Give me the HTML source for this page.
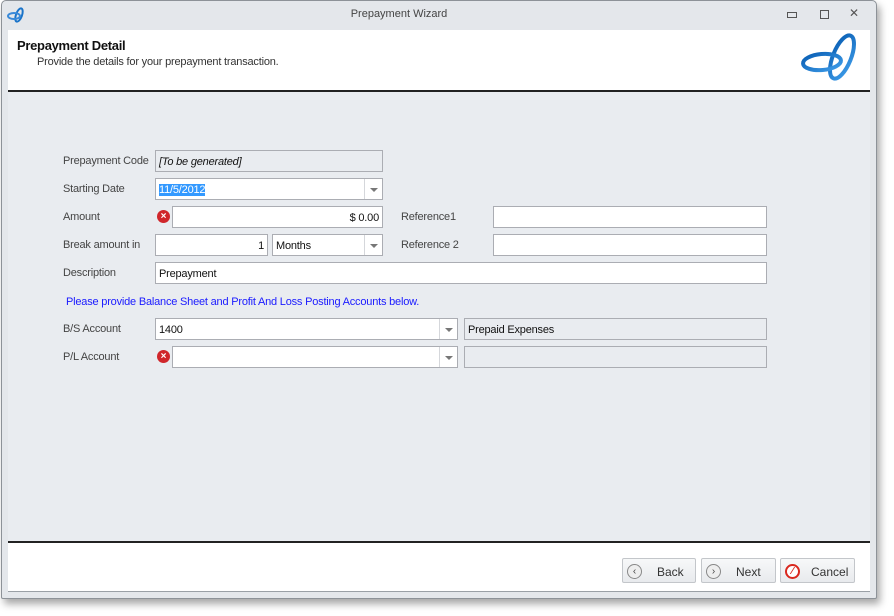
<!DOCTYPE html>
<html><head><style>
*{margin:0;padding:0;box-sizing:border-box}
body{width:894px;height:616px;background:#fff;font-family:"Liberation Sans",sans-serif;font-size:11px;color:#333;position:relative;overflow:hidden}
.a{position:absolute}
.win{left:1px;top:0;width:876px;height:599px;background:#e4e7eb;border:1px solid #8d9298;border-radius:5px 5px 2px 2px;box-shadow:3px 5px 8px rgba(0,0,0,.35)}
.lbl{position:absolute;color:#444;font-size:11px;letter-spacing:-0.2px}
.box{position:absolute;border:1px solid #abadb3;background:#fff;height:22px;font-size:11px;color:#111;padding:5px 3px 0;white-space:nowrap;letter-spacing:-0.2px}
.gray{background:#e9ecf0}
.dd{position:absolute;right:0;top:0;width:18px;height:20px;border-left:1px solid #d5d7db}
.dd:after{content:"";position:absolute;left:5px;top:9px;border-left:4px solid transparent;border-right:4px solid transparent;border-top:4px solid #777}
.err{position:absolute;width:13px;height:13px;border-radius:50%;background:#d0262b;color:#fff;font-size:10px;font-weight:bold;line-height:13px;text-align:center}
.btn{position:absolute;top:558px;height:25px;border:1px solid #c3c6ca;border-radius:2px;background:linear-gradient(#f7f8f9,#e8eaed);font-size:12px;color:#333}
.ci{position:absolute;left:4px;top:5px;width:15px;height:15px;border-radius:50%;border:1px solid #888;background:#eee;font-size:10px;line-height:13px;text-align:center;color:#444}
</style></head><body>
<div class="a win"></div>
<svg class="a" style="left:6px;top:5px" width="20" height="20" viewBox="0 0 20 20"><ellipse cx="13" cy="10" rx="3" ry="7" transform="rotate(20 13 10)" fill="none" stroke="#1a74c9" stroke-width="2"/><ellipse cx="8" cy="11" rx="6" ry="3" fill="none" stroke="#3a8ad9" stroke-width="2"/></svg>
<div class="a" style="left:0;width:798px;top:8px;text-align:center;font-size:11px;color:#444">Prepayment Wizard</div>
<div class="a" style="left:787px;top:12px;width:10px;height:6px;border:1px solid #555"></div>
<div class="a" style="left:820px;top:10px;width:9px;height:9px;border:1px solid #555"></div>
<div class="a" style="left:849px;top:6px;font-size:12px;color:#555">✕</div>
<div class="a" style="left:8px;top:30px;width:862px;height:60px;background:#fff"></div>
<div class="a" style="left:17px;top:38px;font-size:13px;font-weight:bold;color:#111;letter-spacing:-0.3px">Prepayment Detail</div>
<div class="a" style="left:37px;top:56px;font-size:11px;color:#333;letter-spacing:-0.2px">Provide the details for your prepayment transaction.</div>
<svg class="a" style="left:795px;top:30px" width="70" height="58" viewBox="0 0 70 58"><defs><linearGradient id="g" x1="0" x2="1" y1="0" y2="1"><stop offset="0" stop-color="#0a5fb4"/><stop offset="1" stop-color="#3d9be8"/></linearGradient></defs><ellipse cx="47" cy="27" rx="9" ry="23" transform="rotate(22 47 27)" fill="none" stroke="url(#g)" stroke-width="4"/><ellipse cx="27" cy="32" rx="19" ry="8" transform="rotate(-5 27 32)" fill="none" stroke="url(#g)" stroke-width="4"/></svg>
<div class="a" style="left:8px;top:90px;width:862px;height:2px;background:#222"></div>
<div class="a" style="left:8px;top:92px;width:862px;height:449px;background:#e9ecf0"></div>
<div class="a" style="left:8px;top:541px;width:862px;height:2px;background:#222"></div>
<div class="a" style="left:8px;top:543px;width:862px;height:49px;background:#fff;border-bottom:1px solid #9aa0a6"></div>

<div class="lbl" style="left:63px;top:155px">Prepayment Code</div>
<div class="box gray" style="left:155px;top:150px;width:228px;font-style:italic">[To be generated]</div>
<div class="lbl" style="left:63px;top:183px">Starting Date</div>
<div class="box" style="left:155px;top:178px;width:228px"><span style="background:#3399ff;color:#fff">11/5/2012</span><div class="dd"></div></div>
<div class="lbl" style="left:63px;top:211px">Amount</div>
<div class="err" style="left:157px;top:210px">×</div>
<div class="box" style="left:172px;top:206px;width:211px;text-align:right">$ 0.00</div>
<div class="lbl" style="left:401px;top:211px">Reference1</div>
<div class="box" style="left:493px;top:206px;width:274px"></div>
<div class="lbl" style="left:63px;top:239px">Break amount in</div>
<div class="box" style="left:155px;top:234px;width:113px;text-align:right">1</div>
<div class="box" style="left:272px;top:234px;width:111px">Months<div class="dd"></div></div>
<div class="lbl" style="left:401px;top:239px">Reference 2</div>
<div class="box" style="left:493px;top:234px;width:274px"></div>
<div class="lbl" style="left:63px;top:267px">Description</div>
<div class="box" style="left:155px;top:262px;width:612px">Prepayment</div>
<div class="a" style="left:66px;top:296px;color:#1a1aff;font-size:11px;letter-spacing:-0.2px">Please provide Balance Sheet and Profit And Loss Posting Accounts below.</div>
<div class="lbl" style="left:63px;top:323px">B/S Account</div>
<div class="box" style="left:155px;top:318px;width:303px">1400<div class="dd"></div></div>
<div class="box gray" style="left:464px;top:318px;width:303px">Prepaid Expenses</div>
<div class="lbl" style="left:63px;top:351px">P/L Account</div>
<div class="err" style="left:157px;top:350px">×</div>
<div class="box" style="left:172px;top:346px;width:286px"><div class="dd"></div></div>
<div class="box gray" style="left:464px;top:346px;width:303px"></div>

<div class="btn" style="left:622px;width:74px"><div class="ci">‹</div><span class="a" style="left:34px;top:6px">Back</span></div>
<div class="btn" style="left:701px;width:75px"><div class="ci">›</div><span class="a" style="left:34px;top:6px">Next</span></div>
<div class="btn" style="left:780px;width:75px"><div class="ci" style="background:#fff;border:2px solid #d9281f;color:#d9281f;font-weight:bold;line-height:11px">⁄</div><span class="a" style="left:30px;top:6px">Cancel</span></div>
</body></html>
